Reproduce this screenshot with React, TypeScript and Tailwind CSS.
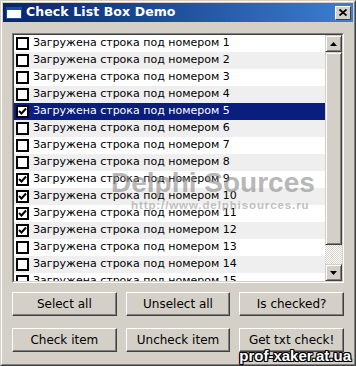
import React from "react";

const items = Array.from({ length: 15 }, (_, i) => i + 1);
const checked = new Set([5, 9, 10, 11, 12]);

function Check({ on }: { on: boolean }) {
  return (
    <div className="w-[13px] h-[13px] border-2 border-black bg-white flex items-center justify-center shrink-0">
      {on && (
        <svg width="9" height="9" viewBox="0 0 9 9">
          <path d="M1 4 L3.5 6.5 L8 1.5" stroke="#000" strokeWidth="2" fill="none" />
        </svg>
      )}
    </div>
  );
}

function Btn({ label }: { label: string }) {
  return (
    <div className="h-[24px] bg-[#d4d0c8] border-t border-l border-t-white border-l-white border-r border-b border-r-[#404040] border-b-[#404040] shadow-[inset_-1px_-1px_0_#808080] flex items-center justify-center text-[12px] text-black">
      {label}
    </div>
  );
}

export default function App() {
  return (
    <div
      className="w-[356px] h-[366px] bg-[#d4d0c8] relative overflow-hidden border border-t-[#d4d0c8] border-l-[#d4d0c8] border-r-[#404040] border-b-[#404040]"
      style={{ fontFamily: '"DejaVu Sans", sans-serif' }}
    >
      <div className="w-full h-full border border-t-white border-l-white border-r-[#808080] border-b-[#808080] p-[1px] flex flex-col">
        {/* title bar */}
        <div className="h-[19px] bg-gradient-to-r from-[#0a246a] to-[#3c7fd2] flex items-center pl-[3px] pr-[2px]">
          <div className="w-[16px] h-[12px] bg-white border-t-[3px] border-[#1c4aa0] border-x border-b mr-[4px]" />
          <span className="text-white font-bold text-[12.5px] tracking-[0.1px]">Check List Box Demo</span>
          <div className="ml-auto w-[16px] h-[14px] bg-[#d4d0c8] border-t border-l border-white border-r border-b border-r-[#404040] border-b-[#404040] flex items-center justify-center">
            <svg width="8" height="7" viewBox="0 0 8 7">
              <path d="M0.5 0.5 L7.5 6.5 M7.5 0.5 L0.5 6.5" stroke="#000" strokeWidth="1.8" />
            </svg>
          </div>
        </div>

        <div className="flex flex-col px-[9px] pt-[11px]">
          {/* list box */}
          <div className="h-[250px] border border-t-[#808080] border-l-[#808080] border-r-white border-b-white">
            <div className="h-full border border-t-[#404040] border-l-[#404040] border-r-[#d4d0c8] border-b-[#d4d0c8] flex bg-white overflow-hidden">
              <div className="flex-1 overflow-hidden">
                {items.map((n) => {
                  const sel = n === 5;
                  return (
                    <div
                      key={n}
                      className={
                        "h-[17px] flex items-center pl-[2px] gap-[4px] text-[11px] " +
                        (sel ? "bg-[#0a1e80] text-white" : n % 2 === 0 ? "bg-[#efefef] text-black" : "bg-white text-black")
                      }
                    >
                      <Check on={checked.has(n)} />
                      <span className="whitespace-nowrap">Загружена строка под номером {n}</span>
                    </div>
                  );
                })}
              </div>
              {/* scrollbar */}
              <div className="w-[17px] flex flex-col bg-[#d4d0c8]">
                <div className="h-[17px] bg-[#d4d0c8] border-t border-l border-t-[#d4d0c8] border-l-[#d4d0c8] border-r border-b border-r-[#404040] border-b-[#404040] shadow-[inset_1px_1px_0_#fff,inset_-1px_-1px_0_#808080] flex items-center justify-center">
                  <svg width="7" height="4" viewBox="0 0 7 4"><path d="M3.5 0 L7 4 L0 4 Z" fill="#000" /></svg>
                </div>
                <div className="h-[193px] bg-[#d4d0c8] border-t border-l border-t-[#d4d0c8] border-l-[#d4d0c8] border-r border-b border-r-[#404040] border-b-[#404040] shadow-[inset_1px_1px_0_#fff,inset_-1px_-1px_0_#808080]" />
                <div
                  className="flex-1"
                  style={{
                    backgroundImage: "repeating-conic-gradient(#ffffff 0% 25%, #d4d0c8 0% 50%)",
                    backgroundSize: "2px 2px",
                  }}
                />
                <div className="h-[17px] bg-[#d4d0c8] border-t border-l border-t-[#d4d0c8] border-l-[#d4d0c8] border-r border-b border-r-[#404040] border-b-[#404040] shadow-[inset_1px_1px_0_#fff,inset_-1px_-1px_0_#808080] flex items-center justify-center">
                  <svg width="7" height="4" viewBox="0 0 7 4"><path d="M0 0 L7 0 L3.5 4 Z" fill="#000" /></svg>
                </div>
              </div>
            </div>
          </div>

          {/* buttons */}
          <div className="grid grid-cols-3 gap-x-[9px] gap-y-[12px] mt-[9px]">
            <Btn label="Select all" />
            <Btn label="Unselect all" />
            <Btn label="Is checked?" />
            <Btn label="Check item" />
            <Btn label="Uncheck item" />
            <Btn label="Get txt check!" />
          </div>
        </div>
      </div>

      {/* watermarks */}
      <div
        className="absolute left-[110px] top-[168px] text-[28px] leading-none font-bold text-[#8a8a8a] opacity-60 whitespace-nowrap pointer-events-none"
        style={{ fontFamily: '"Liberation Sans", Arial, sans-serif' }}
      >
        Delphi Sources
      </div>
      <div
        className="absolute left-[130px] top-[199px] text-[11.5px] leading-none font-bold text-[#a8a8a8] opacity-70 tracking-[0.9px] whitespace-nowrap pointer-events-none"
        style={{ fontFamily: '"Liberation Sans", Arial, sans-serif' }}
      >
        http://www.delphisources.ru
      </div>
      <div
        className="absolute right-[4px] bottom-[2px] text-[15px] leading-none font-bold text-white whitespace-nowrap pointer-events-none"
        style={{
          fontFamily: '"Liberation Sans", Arial, sans-serif',
          textShadow:
            "1px 0 #000, -1px 0 #000, 0 1px #000, 0 -1px #000, 1px 1px #000, -1px -1px #000, 1px -1px #000, -1px 1px #000",
        }}
      >
        prof-xaker.at.ua
      </div>
    </div>
  );
}
